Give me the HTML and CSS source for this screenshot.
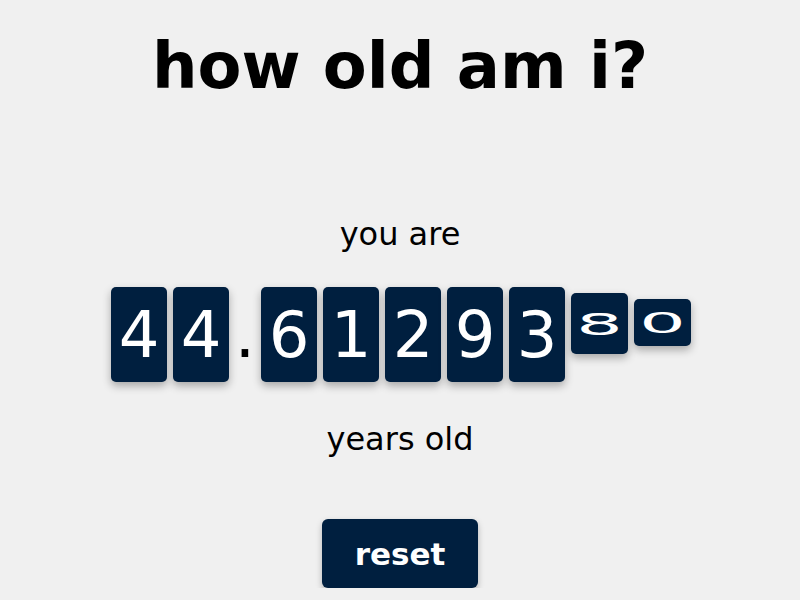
FILE: index.html
```html
<!DOCTYPE html>
<html lang="en">
<head>
<meta charset="utf-8">
<title>how old am i?</title>
<link rel="stylesheet" href="styles.css">
</head>
<body>
<main class="page">
  <h1 class="title">how old am i?</h1>
  <p class="label label-top">you are</p>
  <div class="counter">
    <span class="digit">4</span>
    <span class="digit">4</span>
    <span class="dot">.</span>
    <span class="digit">6</span>
    <span class="digit">1</span>
    <span class="digit">2</span>
    <span class="digit">9</span>
    <span class="digit">3</span>
    <span class="digit small small-a"><span class="squash squash-a">8</span></span>
    <span class="digit small small-b"><span class="squash squash-b">0</span></span>
  </div>
  <p class="label label-bottom">years old</p>
  <button class="reset" type="button">reset</button>
</main>
</body>
</html>
```

FILE: styles.css
```css
html, body {
  margin: 0;
  padding: 0;
  background: #f0f0f0;
}

body {
  font-family: "DejaVu Sans", Verdana, sans-serif;
  color: #000;
}

.page {
  display: flex;
  flex-direction: column;
  align-items: center;
}

.title {
  margin: 29px 0 0;
  font-size: 64px;
  font-weight: bold;
  line-height: normal;
}

.label {
  margin: 0;
  font-size: 32px;
  line-height: normal;
}

.label-top {
  margin-top: 112px;
}

.counter {
  display: flex;
  align-items: flex-start;
  gap: 6px;
  margin-top: 34px;
  margin-left: 2px;
}

.digit {
  width: 56px;
  height: 95px;
  background: #001f3f;
  color: #fff;
  border-radius: 5px;
  box-shadow: 0 4px 8px rgba(0, 0, 0, 0.3);
  font-size: 64px;
  display: flex;
  align-items: center;
  justify-content: center;
  line-height: 1;
}

.dot {
  width: 20px;
  height: 95px;
  font-size: 64px;
  display: flex;
  align-items: center;
  justify-content: center;
  line-height: 1;
}

.small {
  width: 57px;
}

.small-a {
  height: 61px;
  margin-top: 6px;
}

.small-b {
  height: 47px;
  margin-top: 12px;
}

.squash {
  display: inline-block;
}

.squash-a {
  transform: scale(1.14, 0.48);
}

.squash-b {
  transform: scale(1.14, 0.44);
}

.label-bottom {
  margin-top: 38px;
}

.reset {
  margin-top: 61px;
  width: 156px;
  height: 69px;
  border: none;
  border-radius: 6px;
  background: #001f3f;
  color: #fff;
  font-family: "DejaVu Sans", Verdana, sans-serif;
  font-weight: bold;
  font-size: 31px;
  box-shadow: 0 3px 6px rgba(0, 0, 0, 0.25);
  cursor: pointer;
}
```
